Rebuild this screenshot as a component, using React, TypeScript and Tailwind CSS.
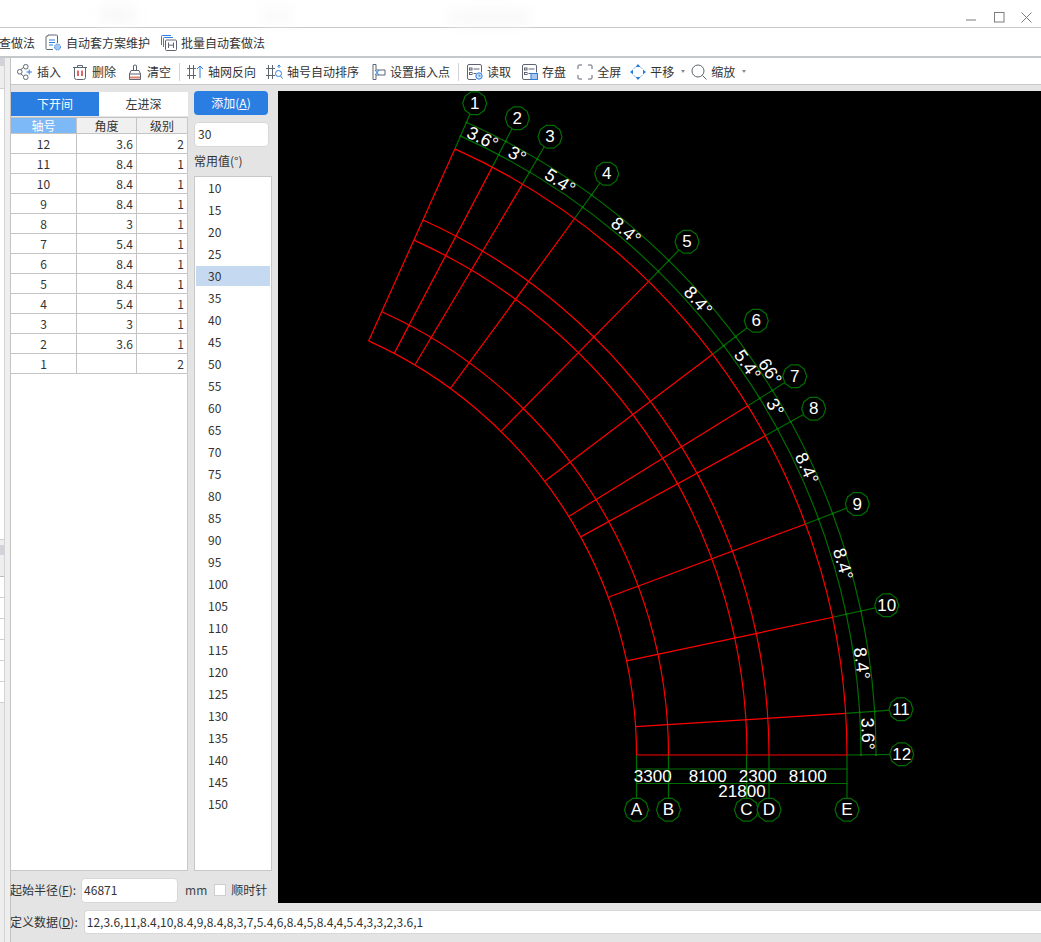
// @ts-nocheck
const cx = 182.5;
const cy = 755;
const radii = [454, 486, 564.5, 586.5, 664.5];
const dimR = [678.5, 693.5];
const angles = [0, 3.6, 12, 20.4, 28.8, 31.8, 37.2, 45.6, 54, 59.4, 62.4, 66];

const pt = (r, deg) => {
  const a = (deg * 0.997 * Math.PI) / 180;
  return [cx + r * Math.cos(a), cy - r * Math.sin(a)];
};
const arc = (r) => {
  const [x, y] = pt(r, 66);
  return `M${cx + r} ${cy}A${r} ${r} 0 0 0 ${x} ${y}`;
};

const axisBubbles = [
  ['12', 901.7, 754.3],
  ['11', 901, 709.3],
  ['10', 886.7, 605.3],
  ['9', 857.3, 504],
  ['8', 813.7, 408.7],
  ['7', 794.7, 376.3],
  ['6', 756.3, 320.7],
  ['5', 687, 241.7],
  ['4', 606.7, 173.7],
  ['3', 550, 136.7],
  ['2', 517.3, 118.3],
  ['1', 474.7, 103.3],
];
const letterBubbles = [
  ['A', 636.5],
  ['B', 668.5],
  ['C', 746.5],
  ['D', 769],
  ['E', 847],
];
const angleLabels = [
  ['3.6°', 482.7, 138.3, 25.8],
  ['3°', 517.3, 155, 29],
  ['5.4°', 560, 181.7, 33.3],
  ['8.4°', 626, 231, 40],
  ['8.4°', 698, 301, 48.6],
  ['5.4°', 747.3, 365, 55.5],
  ['66°', 770, 371.7, 57],
  ['3°', 775, 407.3, 59.7],
  ['8.4°', 806.7, 468.3, 65.4],
  ['8.4°', 843, 564, 73.8],
  ['8.4°', 861.7, 663.3, 82.2],
  ['3.6°', 867.7, 734, 88.2],
];
const dims = [
  ['3300', 652.7, 776.7],
  ['8100', 707.7, 776.7],
  ['2300', 757.7, 776.7],
  ['8100', 807.7, 776.7],
  ['21800', 742, 791],
];

const decagon = (x, y, r) =>
  Array.from({ length: 10 }, (_, i) => {
    const a = (i * 36 * Math.PI) / 180;
    return `${x + r * Math.cos(a)},${y + r * Math.sin(a)}`;
  }).join(' ');

function GridCanvas() {
  return (
    <svg viewBox="278 91 763 812" width="763" height="812" className="block bg-black">
      <g fill="none" stroke="#006e00" strokeWidth="1.2">
        {dimR.map((r) => (
          <path key={r} d={arc(r)} />
        ))}
        {angles.map((a, i) => {
          const [x1, y1] = pt(radii[4], a);
          const [, bx, by] = axisBubbles[i];
          return <line key={a} x1={x1} y1={y1} x2={bx} y2={by} />;
        })}
        {letterBubbles.map(([k, x]) => (
          <line key={k} x1={x} y1={755} x2={x} y2={798} />
        ))}
        <line x1="636.5" y1="769" x2="847.5" y2="769" />
        <line x1="636.5" y1="783.5" x2="847.5" y2="783.5" />
      </g>
      <g fill="#008000">
        {angles.map((a) =>
          dimR.map((r) => {
            const [x, y] = pt(r, a);
            return <circle key={`${a}-${r}`} cx={x} cy={y} r="1.1" />;
          }),
        )}
      </g>
      <g fill="none" stroke="#ff0000" strokeWidth="1.2">
        {radii.map((r) => (
          <path key={r} d={arc(r)} />
        ))}
        {angles.map((a) => {
          const [x1, y1] = pt(radii[0], a);
          const [x2, y2] = pt(radii[4], a);
          return <line key={a} x1={x1} y1={y1} x2={x2} y2={y2} />;
        })}
      </g>
      <g fill="#000" stroke="#006e00" strokeWidth="1.2">
        {axisBubbles.map(([k, x, y]) => (
          <polygon key={k} points={decagon(x, y, 12)} />
        ))}
        {letterBubbles.map(([k, x]) => (
          <polygon key={k} points={decagon(x, 809.7, 12)} />
        ))}
      </g>
      <g fill="#fff" textAnchor="middle" dominantBaseline="central" className="font-['Liberation_Sans',sans-serif] text-[17px]">
        {axisBubbles.map(([k, x, y]) => (
          <text key={k} x={x} y={y}>
            {k}
          </text>
        ))}
        {letterBubbles.map(([k, x]) => (
          <text key={k} x={x} y={809.7}>
            {k}
          </text>
        ))}
        {angleLabels.map(([t, x, y, rot], i) => (
          <text key={i} x={x} y={y} transform={`rotate(${rot} ${x} ${y})`} className="text-[18px]">
            {t}
          </text>
        ))}
        {dims.map(([t, x, y], i) => (
          <text key={i} x={x} y={y}>
            {t}
          </text>
        ))}
      </g>
    </svg>
  );
}

const ink = '#5f6570';
const blue = '#2a7de1';

function InsertIcon() {
  return (
    <svg width="16" height="16" viewBox="0 0 16 16" fill="none" stroke={ink}>
      <rect x="6.5" y="0.5" width="4.5" height="4.5" rx="2" />
      <rect x="0.5" y="5.5" width="4.5" height="4.5" rx="2" />
      <rect x="6.5" y="11" width="4.5" height="4.5" rx="2" />
      <path d="M6.5 3.5L4 5.5M4 10L6.5 12" />
      <path d="M9.5 8H15M12.2 5.5V10.5" stroke={blue} />
    </svg>
  );
}
function TrashIcon() {
  return (
    <svg width="16" height="16" viewBox="0 0 16 16" fill="none" stroke={ink}>
      <path d="M1 3.5H15M5.5 3.5V1.5H10.5V3.5M2.5 3.5V13.5Q2.5 15.5 4.5 15.5H11.5Q13.5 15.5 13.5 13.5V3.5" />
      <path d="M6 6.5V12M10 6.5V12" stroke="#d9252a" strokeWidth="1.4" />
    </svg>
  );
}
function BrushIcon() {
  return (
    <svg width="16" height="16" viewBox="0 0 16 16" fill="none" stroke={ink}>
      <path d="M6.5 6V1.5Q8 0.5 9.5 1.5V6M2.5 10L4 6.5H12L13.5 10M2.5 10V15.5H13.5V10Z" />
      <path d="M3 13.5H13" stroke="#d9826f" strokeWidth="2" />
    </svg>
  );
}
function AxisBars() {
  return <path d="M3.5 1V15M7.5 1V15M1 4.5H10M1 11.5H10" stroke={ink} fill="none" />;
}
function ReverseIcon() {
  return (
    <svg width="18" height="16" viewBox="0 0 18 16" fill="none">
      <AxisBars />
      <path d="M14 14V2M11 5L14 2L17 5" stroke={blue} />
    </svg>
  );
}
function SortIcon() {
  return (
    <svg width="18" height="16" viewBox="0 0 18 16" fill="none">
      <AxisBars />
      <path d="M14 1V4M12.5 2.5L14 1L15.5 2.5" stroke={blue} />
      <circle cx="13.5" cy="9.5" r="3" stroke={blue} />
      <path d="M15.5 12L17.5 14.5" stroke={blue} />
    </svg>
  );
}
function InsertPointIcon() {
  return (
    <svg width="14" height="16" viewBox="0 0 14 16" fill="none" stroke={ink}>
      <path d="M1 0.5H4V6L13 6V11H4V15.5H1Z" />
      <path d="M3 6L7 11M7 6L3 11" stroke={blue} />
    </svg>
  );
}
function DocIcon({ children }) {
  return (
    <svg width="16" height="16" viewBox="0 0 16 16" fill="none">
      <path d="M9 15.5H2Q0.5 15.5 0.5 14V2Q0.5 0.5 2 0.5H13Q14.5 0.5 14.5 2V8.5" stroke={ink} />
      <rect x="2.5" y="4" width="2.5" height="2" stroke={ink} />
      <rect x="2.5" y="8.5" width="2.5" height="2" stroke={ink} />
      <path d="M6.5 5H12.5M6.5 9.5H9" stroke={ink} />
      {children}
    </svg>
  );
}
function FullIcon() {
  return (
    <svg width="16" height="16" viewBox="0 0 16 16" fill="none" stroke={ink}>
      <path d="M5 1H2Q1 1 1 2V5M11 1H14Q15 1 15 2V5M5 15H2Q1 15 1 14V11M11 15H14Q15 15 15 14V11" />
    </svg>
  );
}
function PanIcon() {
  return (
    <svg width="16" height="16" viewBox="0 0 16 16" fill={blue}>
      <path d="M8 0L10.5 3H5.5ZM8 16L5.5 13H10.5ZM0 8L3 5.5V10.5ZM16 8L13 10.5V5.5Z" />
      <path d="M4 4.5L5 3.5M12 4.5L11 3.5M4 11.5L5 12.5M12 11.5L11 12.5" stroke={blue} fill="none" />
    </svg>
  );
}
function ZoomIcon() {
  return (
    <svg width="16" height="16" viewBox="0 0 16 16" fill="none" stroke={ink}>
      <circle cx="7" cy="7" r="6" />
      <path d="M11.5 11.5L15.5 15.5" />
    </svg>
  );
}
function Caret() {
  return <span className="ml-[7px] h-0 w-0 border-x-[2.5px] border-t-[3px] border-x-transparent border-t-[#8a8a8a]" />;
}
function SchemeIcon() {
  return (
    <svg width="17" height="17" viewBox="0 0 17 17" fill="none">
      <path d="M8 15.5H2Q1 15.5 1 14.5V3Q1 2 2 2H3V1H11.5Q12.5 1 12.5 2V9" stroke={ink} />
      <path d="M4 6H10M4 8.5H10M4 11H8" stroke={blue} strokeWidth="1.2" />
      <circle cx="12.5" cy="13" r="3" fill="#a8c8ee" stroke={blue} strokeDasharray="1.5 1" />
    </svg>
  );
}
function BatchIcon() {
  return (
    <svg width="16" height="16" viewBox="0 0 16 16" fill="none">
      <path d="M0.5 10V1.5Q0.5 0.5 1.5 0.5H10M2.5 12V3.5Q2.5 2.5 3.5 2.5H12" stroke={blue} />
      <rect x="4.5" y="5" width="11" height="10.5" rx="1" stroke={ink} />
      <path d="M7.5 7.5V13M12.5 7.5V13M7.5 10.2H12.5" stroke={ink} />
    </svg>
  );
}

function Tool({ icon, label, className }) {
  return (
    <div className={`flex items-center ${className}`}>
      {icon}
      <span className="ml-[4px] whitespace-nowrap">{label}</span>
    </div>
  );
}

const rows = [
  ['12', '3.6', '2'],
  ['11', '8.4', '1'],
  ['10', '8.4', '1'],
  ['9', '8.4', '1'],
  ['8', '3', '1'],
  ['7', '5.4', '1'],
  ['6', '8.4', '1'],
  ['5', '8.4', '1'],
  ['4', '5.4', '1'],
  ['3', '3', '1'],
  ['2', '3.6', '1'],
  ['1', '', '2'],
];
const common = [10, 15, 20, 25, 30, 35, 40, 45, 50, 55, 60, 65, 70, 75, 80, 85, 90, 95, 100, 105, 110, 115, 120, 125, 130, 135, 140, 145, 150];

function SideStrip() {
  return (
    <div className="flex w-[11px] shrink-0 border-r border-r-[#c4c4c4] bg-[#eeeeee]">
      <div className="flex w-[5px] flex-col border-r border-r-[#d4d4d4]">
        <div className="h-[8px] bg-[#d2d3da]" />
        <div className="h-[22px] bg-[#eeeeee]" />
        <div className="h-[452px] border-y border-y-[#d0d0d0] bg-white" />
        <div className="h-[5px]" />
        <div className="h-[10px] bg-[#d2d3da]" />
        <div className="h-[22px] border-b border-b-[#bdbdbd] bg-[#eeeeee]" />
        {[0, 1, 2, 3, 4, 5].map((i) => (
          <div key={i} className="h-[21px] border-b border-b-[#d0d0d0] bg-white" />
        ))}
      </div>
    </div>
  );
}

export default function App() {
  return (
    <div className="relative flex h-[942px] w-[1041px] flex-col overflow-hidden bg-[#e4e4e4] font-['Noto_Sans_CJK_SC','Noto_Sans',sans-serif] text-[12px] text-[#333333]">
      {/* title bar, the text in it is smudged out */}
      <div className="relative flex h-[28px] shrink-0 items-center justify-end border-b border-b-[#c8c8c8] bg-white">
        <div className="absolute left-[100px] top-[8px] h-[14px] w-[36px] bg-[#f6f6f6] blur-sm" />
        <div className="absolute left-[262px] top-[10px] h-[12px] w-[30px] bg-[#f7f7f7] blur-sm" />
        <div className="absolute left-[450px] top-[12px] h-[12px] w-[80px] bg-[#f6f6f6] blur-sm" />
        <svg width="12" height="2" className="mr-[16px] mt-[13px]">
          <path d="M0 1H10" stroke="#7d7d7d" />
        </svg>
        <svg width="11" height="11" className="mr-[16px] mt-[7px]" fill="none" stroke="#7d7d7d">
          <rect x="0.5" y="0.5" width="9.5" height="9.5" />
        </svg>
        <svg width="11" height="11" className="mr-[9px] mt-[7px]" fill="none" stroke="#7d7d7d">
          <path d="M0.5 0.5L10.5 10.5M10.5 0.5L0.5 10.5" />
        </svg>
      </div>
      {/* ribbon row */}
      <div className="flex h-[30px] shrink-0 items-center overflow-hidden border-b-2 border-b-[#c5c8ca] bg-white pt-px">
        <span className="ml-[-1px] whitespace-nowrap">查做法</span>
        <Tool className="ml-[10px]" icon={<SchemeIcon />} label="自动套方案维护" />
        <Tool className="ml-[11px]" icon={<BatchIcon />} label="批量自动套做法" />
      </div>
      <div className="flex min-h-0 flex-1">
        <SideStrip />
        <div className="flex min-w-0 flex-1 flex-col">
          {/* toolbar */}
          <div className="flex h-[27px] shrink-0 items-center border-b border-b-[#c8c8c8] bg-white pl-[6px] pt-px">
            <Tool icon={<InsertIcon />} label="插入" />
            <Tool className="ml-[11px]" icon={<TrashIcon />} label="删除" />
            <Tool className="ml-[11px]" icon={<BrushIcon />} label="清空" />
            <div className="ml-[8px] h-[18px] w-px bg-[#d4d4d4]" />
            <Tool className="ml-[6px]" icon={<ReverseIcon />} label="轴网反向" />
            <Tool className="ml-[9px]" icon={<SortIcon />} label="轴号自动排序" />
            <Tool className="ml-[13px]" icon={<InsertPointIcon />} label="设置插入点" />
            <div className="ml-[8px] h-[18px] w-px bg-[#d4d4d4]" />
            <Tool
              className="ml-[8px]"
              icon={
                <DocIcon>
                  <circle cx="12" cy="12" r="3.2" stroke={blue} fill="#cfe2f8" />
                  <path d="M12 10.5V12H13.5" stroke={blue} />
                </DocIcon>
              }
              label="读取"
            />
            <Tool
              className="ml-[11px]"
              icon={
                <DocIcon>
                  <rect x="9" y="9.5" width="6.5" height="6" fill="#a8c8ee" stroke={blue} />
                </DocIcon>
              }
              label="存盘"
            />
            <Tool className="ml-[11px]" icon={<FullIcon />} label="全屏" />
            <Tool className="ml-[9px]" icon={<PanIcon />} label="平移" />
            <Caret />
            <Tool className="ml-[6px]" icon={<ZoomIcon />} label="缩放" />
            <Caret />
          </div>
          <div className="mt-[6px] flex h-[812px] shrink-0">
            <div className="flex w-[267px] shrink-0 flex-col">
              <div className="flex min-h-0 flex-1">
                {/* left: tabs and axis table */}
                <div className="flex w-[177px] shrink-0 flex-col pt-px">
                  <div className="flex h-[24px] shrink-0">
                    <div className="flex w-[88px] items-center justify-center bg-[#2a7de1] text-white">下开间</div>
                    <div className="flex w-[89px] items-center justify-center bg-white">左进深</div>
                  </div>
                  <div className="mt-px h-[754px] border-r border-b border-[#c8c8c8] bg-white">
                    <div className="flex h-[17px] border-y border-y-[#c4c4c4] bg-[#f0f0f0] text-center leading-[15px]">
                      <div className="w-[65px] bg-[#7db8f7] text-white">轴号</div>
                      <div className="w-[60px] border-l border-l-[#c4c4c4]">角度</div>
                      <div className="flex-1 border-l border-l-[#c4c4c4]">级别</div>
                    </div>
                    {rows.map(([no, deg, level]) => (
                      <div key={no} className="flex h-[20px] border-b border-b-[#c4c4c4] leading-[19px]">
                        <div className="w-[65px] text-center">{no}</div>
                        <div className="w-[60px] border-l border-l-[#c4c4c4] pr-[3px] text-right">{deg}</div>
                        <div className="flex-1 border-l border-l-[#c4c4c4] pr-[3px] text-right">{level}</div>
                      </div>
                    ))}
                  </div>
                </div>
                {/* middle: add button and common values */}
                <div className="ml-[6px] flex w-[78px] shrink-0 flex-col">
                  <div className="flex h-[24px] w-[74px] shrink-0 items-center justify-center rounded-[4px] bg-[#2a7de1] text-white">
                    添加(<span className="underline">A</span>)
                  </div>
                  <div className="mt-[7px] flex h-[25px] w-[75px] shrink-0 items-center rounded-[4px] border border-[#d8d8d8] bg-white pb-px pl-[3px]">
                    30
                  </div>
                  <div className="mt-[6px] h-[23px] shrink-0 leading-[16px]">常用值(°)</div>
                  <div className="h-[696px] border border-[#c8c8c8] bg-white px-px pt-px">
                    {common.map((v) => (
                      <div
                        key={v}
                        className={`mb-[2px] h-[20px] pl-[12px] leading-[20px] ${v === 30 ? 'bg-[#c5d9f0]' : ''}`}
                      >
                        {v}
                      </div>
                    ))}
                  </div>
                </div>
              </div>
              {/* radius row */}
              <div className="ml-[-1px] flex h-[32px] shrink-0 items-center pt-[6px]">
                <span className="whitespace-nowrap">
                  起始半径(<span className="underline">F</span>):
                </span>
                <div className="ml-[5px] flex h-[25px] w-[97px] items-center rounded-[4px] border border-[#d8d8d8] bg-white pl-[2px]">
                  46871
                </div>
                <span className="ml-[7px] text-[#444]">mm</span>
                <div className="ml-[7px] h-[12px] w-[12px] border border-[#cfcfcf] bg-white" />
                <span className="ml-[5px] whitespace-nowrap">顺时针</span>
              </div>
            </div>
            <GridCanvas />
          </div>
          {/* definition data row */}
          <div className="ml-[-1px] mt-[7px] flex h-[24px] shrink-0 items-center">
            <span className="whitespace-nowrap">
              定义数据(<span className="underline">D</span>):
            </span>
            <div className="ml-[6px] flex h-[24px] flex-1 items-center rounded-l-[4px] border border-r-0 border-[#d8d8d8] bg-white pl-[2px]">
              12,3.6,11,8.4,10,8.4,9,8.4,8,3,7,5.4,6,8.4,5,8.4,4,5.4,3,3,2,3.6,1
            </div>
          </div>
        </div>
      </div>
    </div>
  );
}
